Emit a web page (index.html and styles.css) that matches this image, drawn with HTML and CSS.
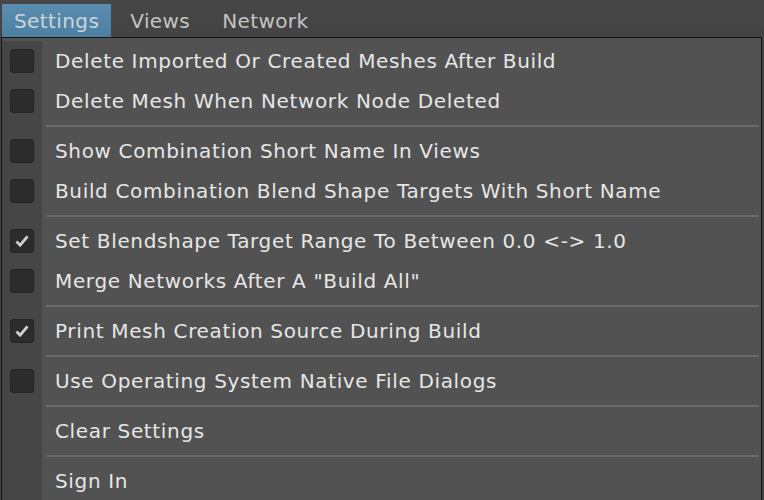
FILE: index.html
```html
<!DOCTYPE html>
<html>
<head>
<meta charset="utf-8">
<link rel="stylesheet" href="styles.css">
</head>
<body>
<div class="app">
  <div class="menubar">
    <div class="mb-item active">Settings</div>
    <div class="mb-item">Views</div>
    <div class="mb-item">Network</div>
  </div>
  <div class="menu">
    <div class="row"><span class="gut"><span class="cb"></span></span><span class="label">Delete Imported Or Created Meshes After Build</span></div>
    <div class="row"><span class="gut"><span class="cb"></span></span><span class="label">Delete Mesh When Network Node Deleted</span></div>
    <div class="sep"><span class="gut"></span><span class="line"></span></div>
    <div class="row"><span class="gut"><span class="cb"></span></span><span class="label">Show Combination Short Name In Views</span></div>
    <div class="row"><span class="gut"><span class="cb"></span></span><span class="label">Build Combination Blend Shape Targets With Short Name</span></div>
    <div class="sep"><span class="gut"></span><span class="line"></span></div>
    <div class="row"><span class="gut"><span class="cb checked"><svg viewBox="0 0 24 24" width="24" height="24"><path d="M6 12.5 L10 16.5 L18 7" fill="none" stroke="#d2d2d2" stroke-width="3"/></svg></span></span><span class="label">Set Blendshape Target Range To Between 0.0 &lt;-&gt; 1.0</span></div>
    <div class="row"><span class="gut"><span class="cb"></span></span><span class="label">Merge Networks After A "Build All"</span></div>
    <div class="sep"><span class="gut"></span><span class="line"></span></div>
    <div class="row"><span class="gut"><span class="cb checked"><svg viewBox="0 0 24 24" width="24" height="24"><path d="M6 12.5 L10 16.5 L18 7" fill="none" stroke="#d2d2d2" stroke-width="3"/></svg></span></span><span class="label">Print Mesh Creation Source During Build</span></div>
    <div class="sep"><span class="gut"></span><span class="line"></span></div>
    <div class="row"><span class="gut"><span class="cb"></span></span><span class="label">Use Operating System Native File Dialogs</span></div>
    <div class="sep"><span class="gut"></span><span class="line"></span></div>
    <div class="row"><span class="gut"></span><span class="label">Clear Settings</span></div>
    <div class="sep"><span class="gut"></span><span class="line"></span></div>
    <div class="row"><span class="gut"></span><span class="label">Sign In</span></div>
  </div>
</div>
</body>
</html>
```
FILE: styles.css
```css
html, body {
  margin: 0;
  padding: 0;
  background: #444444;
  width: 764px;
  height: 500px;
  overflow: hidden;
}
.app {
  font-family: "DejaVu Sans", sans-serif;
}
.menubar {
  height: 37px;
  display: flex;
  align-items: flex-end;
  padding-left: 2px;
  background: linear-gradient(#474747, #434343);
}
.mb-item {
  height: 33px;
  display: flex;
  align-items: center;
  font-size: 20px;
  letter-spacing: 0.4px;
  color: #c4c4c4;
  padding: 0 16px;
}
.mb-item.active {
  padding: 0 12px;
  margin-right: 3px;
  background: linear-gradient(#5a8db0, #4c7fa0);
  color: #ccd4da;
}
.menu {
  margin-left: 1px;
  width: 759px;
  border: 1px solid #151515;
  border-bottom: none;
  background: #525252;
  padding-top: 3px;
  height: 470px;
}
.row {
  height: 40px;
  display: flex;
  align-items: center;
}
.gut {
  width: 40px;
  align-self: stretch;
  background: #464646;
  display: flex;
  align-items: center;
  flex-shrink: 0;
}
.cb {
  width: 22px;
  height: 22px;
  margin-left: 8px;
  background: #2c2c2c;
  border: 1px solid #242424;
  border-radius: 3px;
  display: flex;
  align-items: center;
  justify-content: center;
}
.cb svg { display: block; }
.label {
  margin-left: 13px;
  font-size: 20px;
  letter-spacing: 0.65px;
  color: #e6e6e6;
  white-space: nowrap;
}
.sep {
  height: 10px;
  display: flex;
  align-items: center;
}
.line {
  margin-left: 4px;
  flex: 1;
  margin-right: 2px;
  height: 2px;
  background: #6a6a6a;
}
```
